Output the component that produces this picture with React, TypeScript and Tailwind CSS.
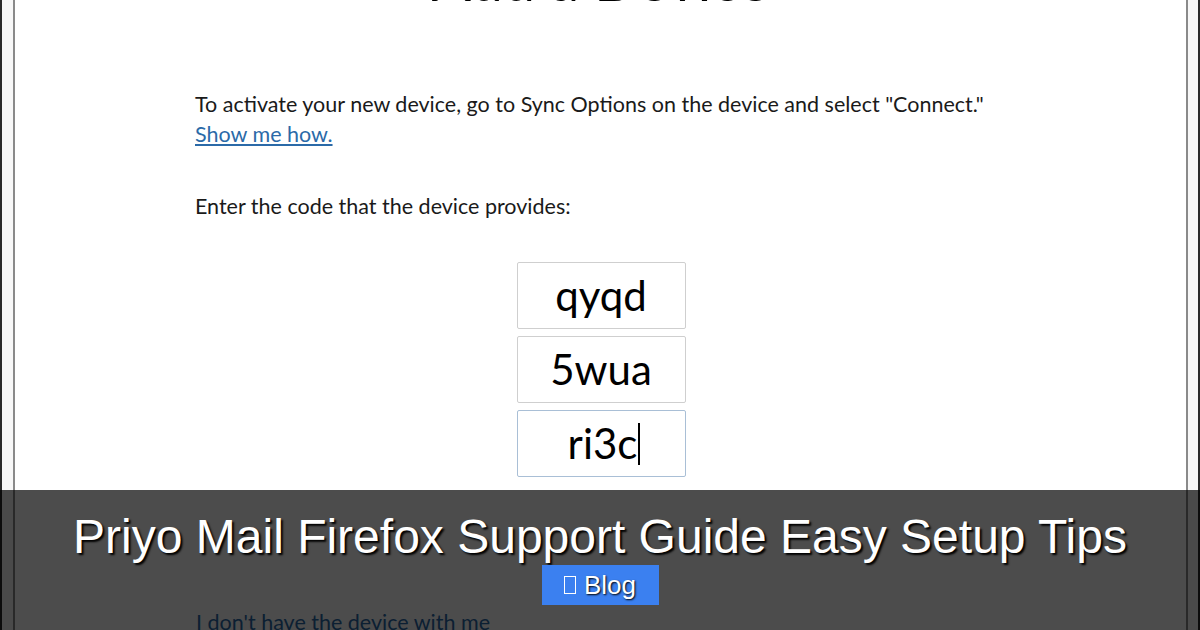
import React from "react";

const segoe = { fontFamily: "Lato, 'Open Sans', sans-serif" };

export default function App() {
  return (
    <div className="relative w-[1200px] h-[630px] overflow-hidden bg-white">
      {/* window frame */}
      <div className="h-full flex">
        <div className="w-[2px] bg-[#2a2a2a]" />
        <div className="w-[11px] bg-[#f7f7f7]" />
        <div className="w-[2px] bg-[#8a8a8a]" />
        <div className="flex-1 bg-white flex flex-col" style={segoe}>
          <div className="h-[52px] mt-[-47px] text-center text-[58px] leading-[52px] text-black font-normal" style={segoe}>
            Add a Device
          </div>
          <div className="pl-[180px] pt-[84px] text-[21.5px] leading-[30px] text-[#1a1a1a]">
            <p>To activate your new device, go to Sync Options on the device and select "Connect."</p>
            <a className="text-[#2b6aa8] underline underline-offset-2">Show me how.</a>
            <p className="mt-[42px]">Enter the code that the device provides:</p>
          </div>
          <div className="flex flex-col items-center gap-[7px] mt-[41px] ml-[1px]">
            <div className="w-[169px] h-[67px] border border-[#cfcfcf] rounded-[2px] flex items-center justify-center text-[42px] text-black">qyqd</div>
            <div className="w-[169px] h-[67px] border border-[#cfcfcf] rounded-[2px] flex items-center justify-center text-[42px] text-black">5wua</div>
            <div className="w-[169px] h-[67px] border border-[#a9bfd6] rounded-[2px] flex items-center justify-center text-[42px] text-black pl-[6px]">
              ri3c<span className="inline-block w-[2px] h-[42px] bg-black ml-[1px]" />
            </div>
          </div>
          <div className="pl-[181px] mt-[129px] text-[21.5px] text-[#2b6aa8]">I don't have the device with me</div>
        </div>
        <div className="w-[2px] bg-[#8a8a8a]" />
        <div className="w-[10px] bg-[#f7f7f7]" />
        <div className="w-[2px] bg-[#2a2a2a]" />
      </div>

      {/* caption overlay */}
      <div className="absolute left-0 right-0 bottom-0 h-[140px] bg-black/70 flex flex-col items-center pt-[17px]">
        <h1
          className="text-white text-[48px] leading-[60px] [text-shadow:2px_2px_2px_#000]"
          style={{ fontFamily: "'Liberation Sans', Arial, sans-serif" }}
        >
          Priyo Mail Firefox Support Guide Easy Setup Tips
        </h1>
        <div
          className="mt-[-2px] w-[117px] h-[40px] bg-[#3b80f0] flex items-center justify-center gap-[8px] text-white text-[26px] [text-shadow:1px_1px_2px_#000]"
          style={{ fontFamily: "'Liberation Sans', Arial, sans-serif" }}
        >
          <span className="inline-block w-[12px] h-[18px] border border-white" />
          <span>Blog</span>
        </div>
      </div>
    </div>
  );
}
